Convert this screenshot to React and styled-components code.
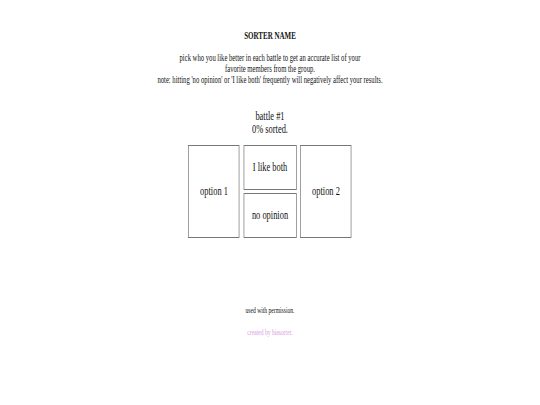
import React from "react";
import styled, { createGlobalStyle } from "styled-components";

const Global = createGlobalStyle`
  html, body { margin: 0; padding: 0; background: #fff; overflow: hidden; }
  body { font-family: "Liberation Serif", "Times New Roman", serif; color: #111; }
`;

const SCALE = 0.7;

const Page = styled.div`
  width: ${540 / SCALE}px;
  transform: scaleX(${SCALE});
  transform-origin: 0 0;
  padding-top: 30px;
  display: flex;
  flex-direction: column;
  align-items: center;
  text-align: center;
`;

const Title = styled.div`
  font-size: 10px;
  line-height: 12px;
  font-weight: bold;
`;

const Desc = styled.div`
  margin-top: 10.5px;
  font-size: 9.5px;
  line-height: 11px;
`;

const Status = styled.div`
  margin-top: 24px;
  font-size: 12px;
  line-height: 13px;
`;

const Arena = styled.div`
  margin-top: 9.5px;
  display: flex;
  gap: ${4 / SCALE}px;
  height: 93px;
`;

const Choice = styled.div`
  width: ${(p) => (p.$full ? "100%" : `${51 / SCALE}px`)};
  box-sizing: border-box;
  border: 1px solid #777;
  display: flex;
  align-items: center;
  justify-content: center;
  font-size: 12px;
  flex: ${(p) => (p.$full ? 1 : "none")};
`;

const Middle = styled.div`
  display: flex;
  flex-direction: column;
  gap: 3px;
  width: ${53 / SCALE}px;
`;

const Small = styled.div`
  margin-top: ${(p) => p.$mt}px;
  font-size: 8px;
  line-height: 9px;
  color: ${(p) => p.$color || "#111"};
`;

export default function App() {
  return (
    <>
      <Global />
      <Page>
        <Title>SORTER NAME</Title>
        <Desc>
          pick who you like better in each battle to get an accurate list of your
          <br />
          favorite members from the group.
          <br />
          note: hitting 'no opinion' or 'I like both' frequently will negatively affect your results.
        </Desc>
        <Status>
          battle #1
          <br />
          0% sorted.
        </Status>
        <Arena>
          <Choice>option 1</Choice>
          <Middle>
            <Choice $full>I like both</Choice>
            <Choice $full>no opinion</Choice>
          </Middle>
          <Choice>option 2</Choice>
        </Arena>
        <Small $mt={67.5}>used with permission.</Small>
        <Small $mt={13} $color="#d99ee2">created by biasorter.</Small>
      </Page>
    </>
  );
}
